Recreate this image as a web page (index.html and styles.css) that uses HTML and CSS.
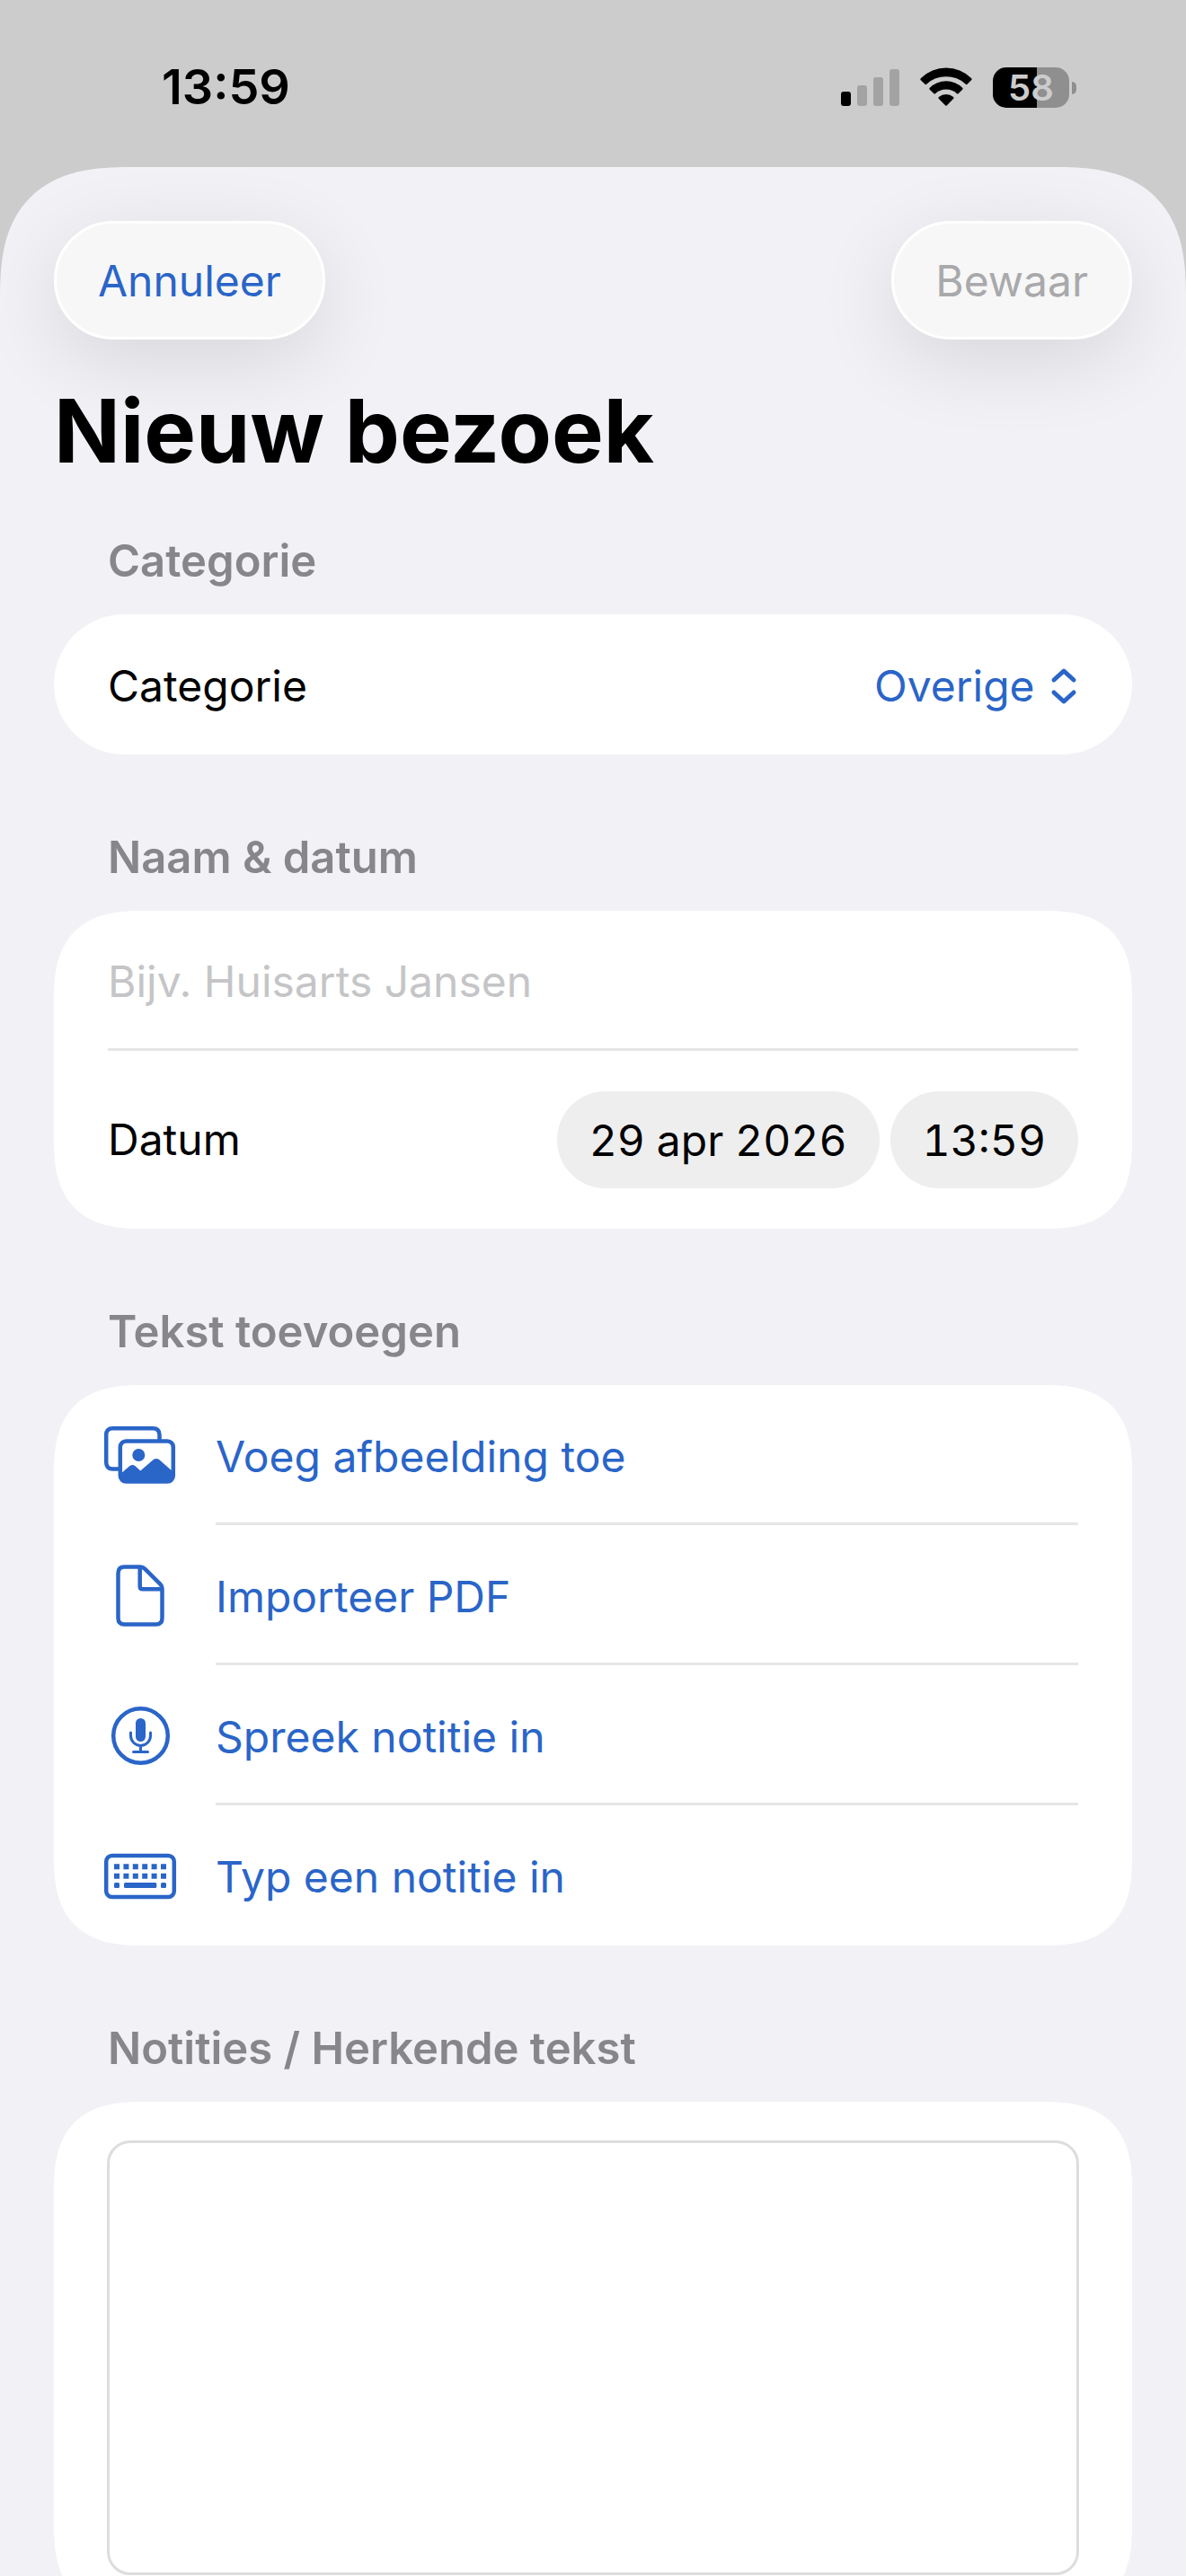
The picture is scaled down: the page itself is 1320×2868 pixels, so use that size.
FILE: index.html
```html
<!DOCTYPE html>
<html lang="nl">
<head>
    <meta charset="UTF-8">
    <meta name="viewport" content="width=device-width, initial-scale=1.0">
    <title>Nieuw bezoek</title>
    <link rel="stylesheet" href="styles.css">
</head>
<body>
    <div class="status-bar">
        <span class="status-time">13:59</span>
        <div class="status-icons">
            <svg width="65" height="45" viewBox="0 0 65 45" aria-hidden="true">
                <rect x="0" y="27" width="11" height="16" rx="3"/>
                <g fill="#a3a3a3">
                    <rect x="18" y="20" width="11" height="23" rx="3"/>
                    <rect x="36" y="11" width="11" height="32" rx="3"/>
                    <rect x="54" y="2" width="11" height="41" rx="3"/>
                </g>
            </svg>
            <svg width="58" height="45" viewBox="0 0 58 45" aria-hidden="true">
                <path d="M0.5 14Q0 13 1 12A40 40 0 0 1 57 12Q58 13 57.300 14L52.500 18.800Q51.700 19.500 50.800 18.700A32 32 0 0 0 7.200 18.700Q6.300 19.500 5.500 18.800Z"/>
                <path d="M10.500 24.500Q10 23.600 10.800 22.800A26 26 0 0 1 47.200 22.800Q48 23.600 47.400 24.500L42.600 29.300Q41.800 29.900 41 29.200A18 18 0 0 0 17 29.200Q16.200 29.900 15.400 29.300Z"/>
                <path d="M20.700 34.700Q20 33.800 20.900 33A12.500 12.500 0 0 1 37.100 33Q38 33.800 37.300 34.700L29.700 42.500Q29 43.100 28.300 42.500Z"/>
            </svg>
            <div class="battery"><span>58</span></div>
        </div>
    </div>

    <form class="sheet" onsubmit="return false">
        <div class="toolbar">
            <button type="button" class="toolbar-btn">Annuleer</button>
            <button type="submit" class="toolbar-btn" disabled>Bewaar</button>
        </div>
        <h1>Nieuw bezoek</h1>

        <h2>Categorie</h2>
        <div class="card card-single">
            <div class="row">
                <label for="category">Categorie</label>
                <div class="picker">
                    <select id="category">
                        <option>Overige</option>
                    </select>
                    <svg width="32" height="44" viewBox="0 0 32 44" aria-hidden="true">
                        <path d="M5 15L16 5L27 15M5 29L16 39L27 29"/>
                    </svg>
                </div>
            </div>
        </div>

        <h2>Naam &amp; datum</h2>
        <div class="card">
            <div class="row row-line">
                <input type="text" class="name-input" placeholder="Bijv. Huisarts Jansen" aria-label="Naam">
            </div>
            <div class="row row-date">
                <span>Datum</span>
                <div class="pills">
                    <button type="button" class="pill">29 apr 2026</button>
                    <button type="button" class="pill">13:59</button>
                </div>
            </div>
        </div>

        <h2>Tekst toevoegen</h2>
        <div class="card">
            <button type="button" class="action">
                <svg class="icon" viewBox="0 0 84 72" aria-hidden="true">
                    <path d="M17 51.500H11.500Q4.200 51.500 4.200 44V13.500Q4.200 6.200 11.500 6.200H56Q63.500 6.200 63.500 13.500V19"/>
                    <rect x="19.800" y="20.500" width="59" height="45" rx="6.500"/>
                    <circle class="solid" cx="40.300" cy="36" r="7"/>
                    <path class="solid" d="M20 57L30.500 48Q33.500 45.800 36.300 48L42.300 53.500L56.500 41.300Q60 38.700 63.400 41.300L79 55V62Q79 66 74 66H25Q20 66 20 62Z"/>
                </svg>
                <span>Voeg afbeelding toe</span>
            </button>
            <button type="button" class="action">
                <svg class="icon" viewBox="0 0 84 72" aria-hidden="true">
                    <path d="M24.500 4.500H42Q45 4.500 47.200 6.700L64.300 23.600Q66.500 25.800 66.500 29V61.500Q66.500 68.500 59.500 68.500H24.500Q17.500 68.500 17.500 61.500V11.500Q17.500 4.500 24.500 4.500Z"/>
                    <path d="M41.700 5V26.300Q41.700 29.300 44.700 29.300H66"/>
                </svg>
                <span>Importeer PDF</span>
            </button>
            <button type="button" class="action">
                <svg class="icon" viewBox="0 0 84 72" aria-hidden="true">
                    <circle cx="42.500" cy="36.500" r="30.300"/>
                    <rect class="solid" x="37" y="17" width="11" height="26" rx="5.500"/>
                    <path class="thin" d="M31.500 33V36.500A11 11 0 0 0 53.500 36.500V33M42.500 47.500V54M34.500 54.500H50.500"/>
                </svg>
                <span>Spreek notitie in</span>
            </button>
            <button type="button" class="action">
                <svg class="icon" viewBox="0 0 84 72" aria-hidden="true">
                    <rect x="4.200" y="14" width="75.600" height="46" rx="6.500"/>
                    <path class="keys" d="M13 26.300H71M13 36.700H71"/>
                    <rect class="solid" x="13" y="44" width="6" height="6" rx="1.500"/>
                    <rect class="solid" x="24" y="44" width="36.300" height="6" rx="1.500"/>
                    <rect class="solid" x="65" y="44" width="6" height="6" rx="1.500"/>
                </svg>
                <span>Typ een notitie in</span>
            </button>
        </div>

        <h2>Notities / Herkende tekst</h2>
        <div class="card card-notes">
            <textarea aria-label="Notities"></textarea>
        </div>
    </form>
</body>
</html>
```
FILE: styles.css
```css
* {
    box-sizing: border-box;
}
body {
    margin: 0;
    height: 100vh;
    display: flex;
    flex-direction: column;
    overflow: hidden;
    background-color: #ccc;
    color: #000;
    font-family: Inter, "Liberation Sans", sans-serif;
    font-size: 48px;
    line-height: 60px;
}
button,
input,
select,
textarea {
    font: inherit;
    color: inherit;
    margin: 0;
    padding: 0;
    border: none;
    background: none;
}
button {
    cursor: pointer;
}

/* Statusbalk */
.status-bar {
    display: flex;
    justify-content: space-between;
    align-items: center;
    flex: none;
    height: 186px;
    padding: 8px 130px 0 180px;
}
.status-time {
    font-size: 54px;
    font-weight: 600;
}
.status-icons {
    display: flex;
    gap: 23px;
}
.battery {
    position: relative;
    width: 85px;
    height: 45px;
    border-radius: 15px;
    background: linear-gradient(to right, #000 58%, #8f8f8f 58%);
    color: #ccc;
    font-size: 40px;
    font-weight: 600;
    line-height: 45px;
    text-align: center;
}
.battery::after {
    content: "";
    position: absolute;
    right: -8px;
    top: 16px;
    width: 5px;
    height: 14px;
    border-radius: 0 7px 7px 0;
    background-color: #8f8f8f;
}

/* Formulier */
.sheet {
    flex: 1;
    padding: 60px;
    overflow-y: auto;
    scrollbar-width: none;
    border-radius: 114px 114px 0 0;
    background-color: #f2f1f6;
}
.toolbar {
    display: flex;
    justify-content: space-between;
}
.toolbar-btn {
    height: 132px;
    padding: 2px 46px 0;
    border: 3px solid #fff;
    border-radius: 66px;
    background-color: #f7f7f7;
    color: #2a65c8;
    box-shadow: 0 24px 90px rgba(0, 0, 0, 0.11);
}
.toolbar-btn:disabled {
    color: #a9a9ab;
    cursor: default;
}
h1 {
    margin: 42px 0 0;
    font-size: 97px;
    font-weight: 700;
    line-height: 120px;
}
h2 {
    margin: 0;
    padding: 55px 60px 29px;
    color: #87868b;
    font-size: 49px;
    font-weight: 600;
    line-height: 60px;
}
.card + h2 {
    padding-top: 85px;
}
.card {
    border-radius: 78px;
    background-color: #fff;
}
.row {
    display: flex;
    justify-content: space-between;
    align-items: center;
    height: 156px;
    margin: 0 60px;
    padding-top: 4px;
}
.row-line {
    border-bottom: 3px solid #e6e6e6;
}
.row-date {
    height: 198px;
    padding-top: 0;
}
.picker {
    display: flex;
    align-items: center;
    gap: 16px;
    color: #2a65c8;
}
.picker select {
    appearance: none;
    height: 60px;
}
.picker svg {
    fill: none;
    stroke: currentColor;
    stroke-width: 5;
    stroke-linecap: round;
    stroke-linejoin: round;
}
.name-input {
    width: 100%;
    height: 60px;
    outline: none;
}
.name-input::placeholder {
    color: #c5c5c7;
    opacity: 1;
}
.pills {
    display: flex;
    gap: 12px;
}
.pill {
    height: 108px;
    padding: 2px 36px 0;
    border-radius: 54px;
    background-color: #eee;
    font-variant-numeric: tabular-nums;
}

/* Knoppen met icoon */
.action {
    display: flex;
    align-items: center;
    gap: 42px;
    width: 100%;
    padding: 0 60px 0 54px;
    color: #2a65c8;
    text-align: left;
}
.action span {
    flex: 1;
    padding: 50px 0 43px;
    border-bottom: 3px solid #e6e6e6;
}
.action:last-child span {
    border-color: transparent;
}
.icon {
    flex: none;
    width: 84px;
    height: 72px;
    fill: none;
    stroke: currentColor;
    stroke-width: 4.5;
    stroke-linecap: round;
    stroke-linejoin: round;
}
.icon .solid {
    fill: currentColor;
    stroke: none;
}
.icon .thin {
    stroke-width: 3;
}
.icon .keys {
    stroke-width: 6;
    stroke-linecap: butt;
    stroke-dasharray: 6 4.4;
}
.card-notes {
    padding: 43px 59px;
}
.card-notes textarea {
    display: block;
    width: 100%;
    height: 484px;
    padding: 24px;
    border: 3px solid #ddd;
    border-radius: 26px;
    outline: none;
    resize: none;
}

/* Vloeiende hoeken waar de browser ze kent */
@supports (corner-shape: squircle) {
    .sheet {
        border-radius: 146px 146px 0 0;
        corner-shape: superellipse(1.4);
    }
    .card:not(.card-single) {
        border-radius: 100px;
        corner-shape: superellipse(1.4);
    }
}
```
